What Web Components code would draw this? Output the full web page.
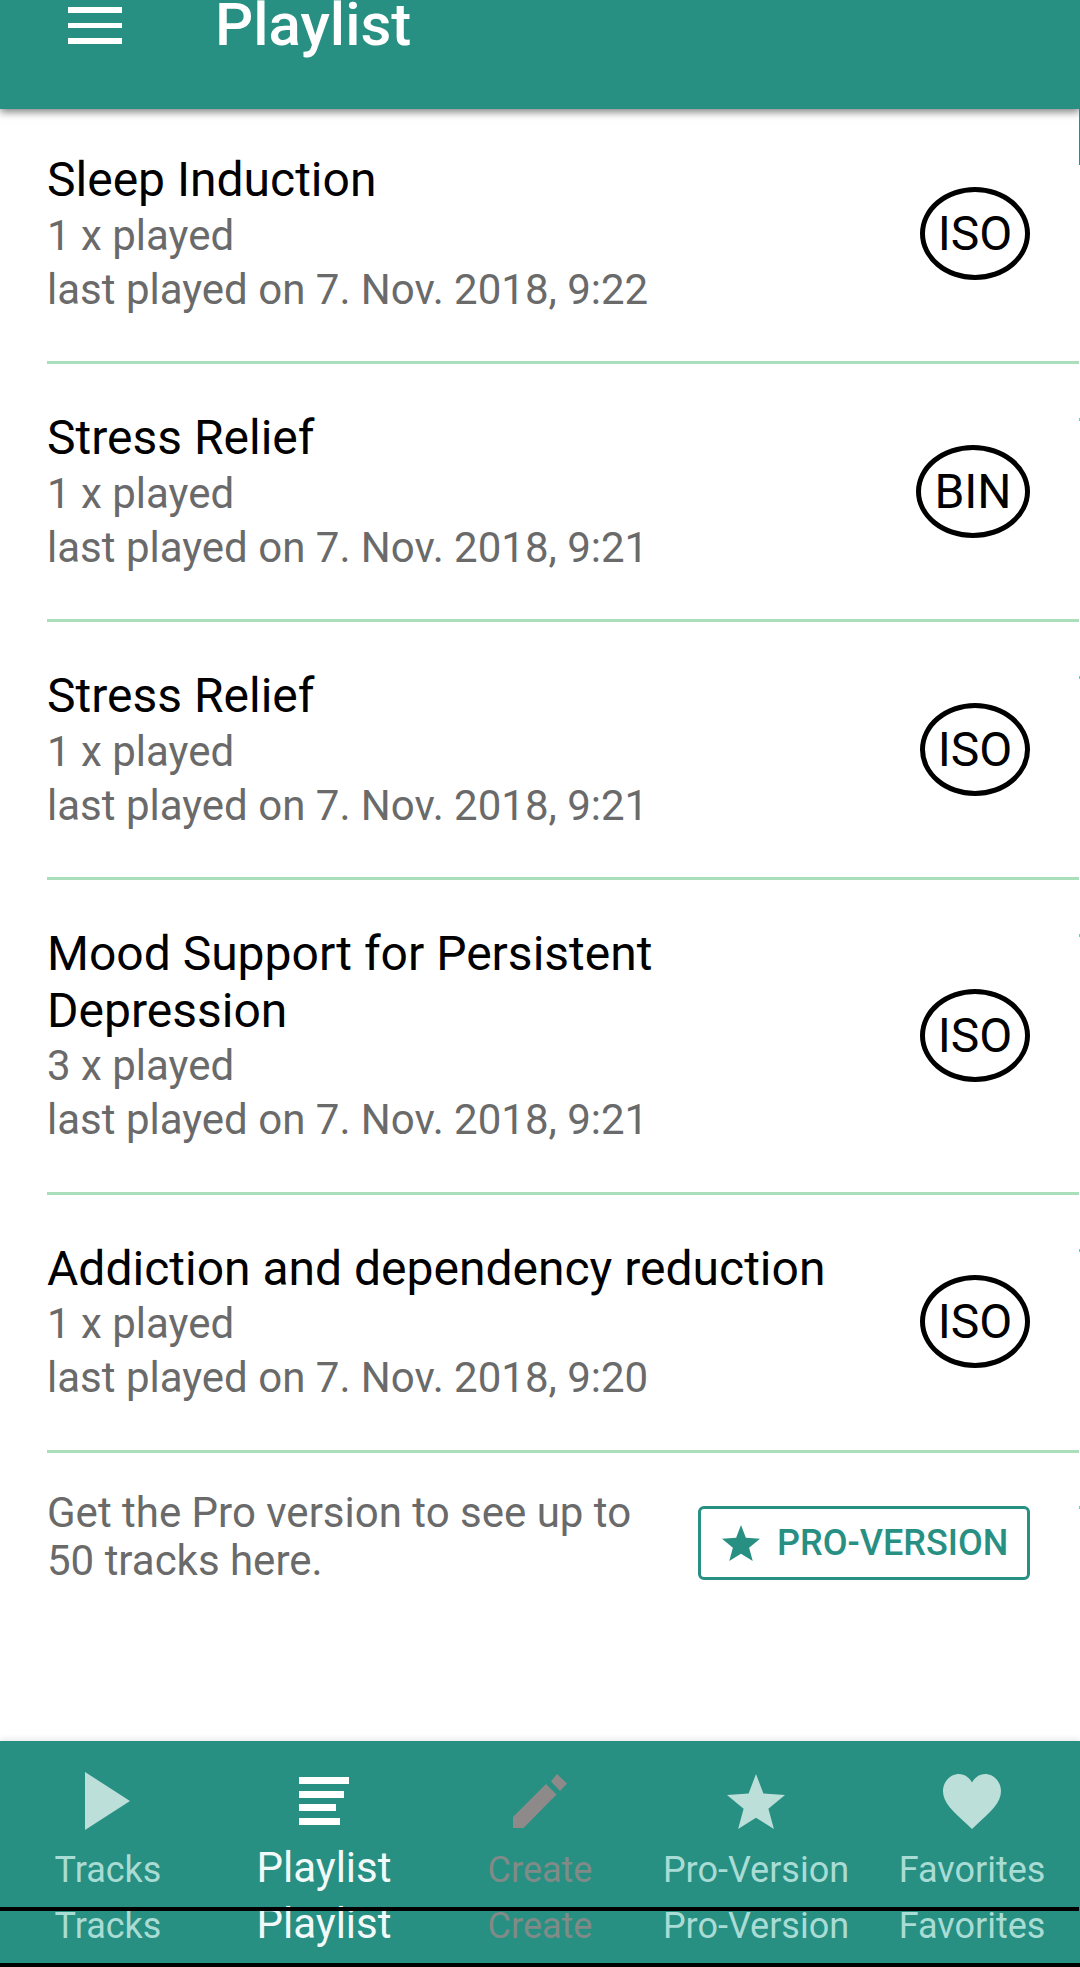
<!DOCTYPE html>
<html>
<head>
<meta charset="utf-8">
<title>Playlist</title>
<style>
  html, body { margin: 0; padding: 0; background: #fff; }
  body { width: 1080px; height: 1967px; overflow: hidden; font-family: Roboto, sans-serif; }
  #app { display: flex; flex-direction: column; height: 1967px; position: relative; }
  play-list { display: block; flex: 1; margin-top: -3px; }
</style>
</head>
<body>
<div id="app">
  <app-bar>Playlist</app-bar>
  <play-list>
    <track-row name="Sleep Induction" count="1" date="7. Nov. 2018, 9:22" kind="ISO"></track-row>
    <track-row name="Stress Relief" count="1" date="7. Nov. 2018, 9:21" kind="BIN"></track-row>
    <track-row name="Stress Relief" count="1" date="7. Nov. 2018, 9:21" kind="ISO"></track-row>
    <track-row name="Mood Support for Persistent Depression" count="3" date="7. Nov. 2018, 9:21" kind="ISO"></track-row>
    <track-row name="Addiction and dependency reduction" count="1" date="7. Nov. 2018, 9:20" kind="ISO"></track-row>
    <pro-hint>Get the Pro version to see up to 50 tracks here.</pro-hint>
  </play-list>
  <bottom-nav></bottom-nav>
</div>

<script>
const TEAL = '#288f83';

/** Top bar, cut off at the top of the screenshot. */
class AppBar extends HTMLElement {
  constructor() {
    super();
    this.attachShadow({ mode: 'open' });
    this.shadowRoot.innerHTML = `
      <style>
        :host { display: flex; align-items: flex-start; height: 109px; background: ${TEAL};
          color: #fff; box-shadow: 0 3px 8px rgba(0,0,0,.5); position: relative; z-index: 2; flex: none; }
        /* scroll indicator, 1px at the right edge under the bar */
        :host::after { content: ''; position: absolute; right: 0; top: 109px; width: 1px; height: 56px; background: ${TEAL}; }
        .menu { display: flex; flex-direction: column; gap: 10px; width: 54px; margin: 7px 0 0 68px; }
        .menu i { display: block; height: 5.5px; background: #fff; }
        .title { margin: 0 0 0 93px; font-size: 60px; font-weight: 500; line-height: 50px; }
      </style>
      <div class="menu"><i></i><i></i><i></i></div>
      <div class="title"><slot></slot></div>`;
  }
}

/** One played track. Attributes: name, count, date, kind */
class TrackRow extends HTMLElement {
  constructor() {
    super();
    this.attachShadow({ mode: 'open' });
  }

  connectedCallback() {
    const a = n => this.getAttribute(n) || '';
    this.shadowRoot.innerHTML = `
      <style>
        :host { display: flex; align-items: center; position: relative; margin-left: 47px; margin-right: 1px;
          padding: 46px 49px 44.5px 0; border-bottom: 3px solid #aadfbb; }
        :host::after { content: ''; position: absolute; right: -1px; top: 54px; width: 1px; height: 3px; background: #7fc4b0; }
        .text { flex: 1; min-width: 0; }
        .name { font-size: 48px; line-height: 56.5px; color: #000; max-width: 800px; }
        .sub { font-size: 42px; line-height: 54px; color: #6a6a6a; }
        .kind { box-sizing: border-box; height: 93px; margin-top: -2px; border: 5.5px solid #000; border-radius: 50%;
          display: flex; align-items: center; justify-content: center; font-size: 48px; color: #000; flex: none; }
      </style>
      <div class="text">
        <div class="name">${a('name')}</div>
        <div class="sub">${a('count')} x played</div>
        <div class="sub">last played on ${a('date')}</div>
      </div>
      <div class="kind" style="width:${a('kind') === 'BIN' ? 114 : 110}px">${a('kind')}</div>`;
  }
}

/** Footer row of the list with the upgrade button. */
class ProHint extends HTMLElement {
  constructor() {
    super();
    this.attachShadow({ mode: 'open' });
    this.shadowRoot.innerHTML = `
      <style>
        :host { display: flex; align-items: flex-start; justify-content: space-between; position: relative;
          margin-left: 47px; margin-right: 1px; padding: 36px 49px 0 0; }
        :host::after { content: ''; position: absolute; right: -1px; top: 53px; width: 1px; height: 3px; background: #7fc4b0; }
        .msg { width: 600px; font-size: 42px; line-height: 48px; color: #6a6a6a; }
        .btn { box-sizing: border-box; width: 332px; height: 74px; margin-top: 17px; border: 3px solid ${TEAL}; border-radius: 6px;
          display: flex; align-items: center; gap: 17px; padding-left: 21px;
          color: ${TEAL}; font-size: 36px; font-weight: 500; }
        svg { width: 38px; height: 38px; fill: ${TEAL}; flex: none; }
      </style>
      <div class="msg"><slot></slot></div>
      <div class="btn">
        <svg viewBox="0 0 58 55"><path d="M29 0l7.400 19.600L58 21 41.400 34.700 46.900 55 29 43.800 11.100 55l5.500-20.300L0 21l21.600-1.400z"/></svg>
        PRO-VERSION
      </div>`;
  }
}

const NAV_ICONS = {
  play: '<svg width="46" height="58" viewBox="0 0 46 58"><path d="M0 0L45 29 0 58z"/></svg>',
  list: '<svg width="50" height="48" viewBox="0 0 50 48"><path d="M0 0h50v7H0zM0 14h45v7H0zM0 27h37v7H0zM0 41h41v7H0z"/></svg>',
  pencil: '<svg width="54" height="54" viewBox="0 0 54 54"><path d="M0 43L33 10 43.500 20.500 10.500 54H0zM38 7.500L44 0 54 9.500 47 17z"/></svg>',
  star: '<svg width="58" height="55" viewBox="0 0 58 55"><path d="M29 0l7.400 19.600L58 21 41.400 34.700 46.900 55 29 43.800 11.100 55l5.500-20.300L0 21l21.600-1.400z"/></svg>',
  heart: '<svg width="58" height="55" viewBox="0 0 58 55"><path d="M29 55L24.800 51C9.700 37.300 0 28.300 0 17.200 0 7.600 7.300 0 16 0 21.300 0 26.100 3.200 29 8.500 31.900 3.200 36.700 0 42 0 50.700 0 58 7.600 58 17.200 58 28.300 48.300 37.300 33.200 51z"/></svg>',
};

/** One tab: icon, label, and the label again below (the doubled strip in the capture). */
class NavItem extends HTMLElement {
  constructor() {
    super();
    this.attachShadow({ mode: 'open' });
  }

  connectedCallback() {
    const label = this.getAttribute('label');
    const state = this.getAttribute('state') || '';
    const colors = { active: ['#fff', '#f2faf9'], off: ['#8e8a8a', '#808b88'] };
    const [iconColor, textColor] = colors[state] || ['#bddfd9', '#a9dcd4'];
    const active = state === 'active';
    this.shadowRoot.innerHTML = `
      <style>
        :host { display: flex; flex-direction: column; align-items: center; color: ${textColor}; }
        .icon { height: 58px; margin-top: 31px; display: flex; align-items: center; fill: ${iconColor}; }
        .label, .copy { font-size: ${active ? 42 : 36}px; line-height: 56px; white-space: nowrap; }
        .label { margin-top: ${active ? 10 : 12}px; }
      </style>
      <div class="icon">${NAV_ICONS[this.getAttribute('icon')]}</div>
      <div class="label">${label}</div>
      <div class="copy">${label}</div>`;
  }
}

class BottomNav extends HTMLElement {
  constructor() {
    super();
    this.attachShadow({ mode: 'open' });
    this.shadowRoot.innerHTML = `
      <style>
        :host { display: block; position: relative; height: 226px; flex: none; background: ${TEAL};
          box-shadow: 0 -3px 5px rgba(0,0,0,.07); }
        .items { display: grid; grid-template-columns: repeat(5, 216px); height: 226px; overflow: hidden; }
        .rule { position: absolute; left: 0; right: 1px; height: 4px; background: #000; }
        .rule.end { right: 0; }
      </style>
      <div class="items">
        <nav-item label="Tracks" icon="play"></nav-item>
        <nav-item label="Playlist" icon="list" state="active"></nav-item>
        <nav-item label="Create" icon="pencil" state="off"></nav-item>
        <nav-item label="Pro-Version" icon="star"></nav-item>
        <nav-item label="Favorites" icon="heart"></nav-item>
      </div>
      <div class="rule" style="top:166px"></div>
      <div class="rule end" style="top:222px"></div>`;
  }
}

customElements.define('app-bar', AppBar);
customElements.define('track-row', TrackRow);
customElements.define('pro-hint', ProHint);
customElements.define('nav-item', NavItem);
customElements.define('bottom-nav', BottomNav);
</script>
</body>
</html>
